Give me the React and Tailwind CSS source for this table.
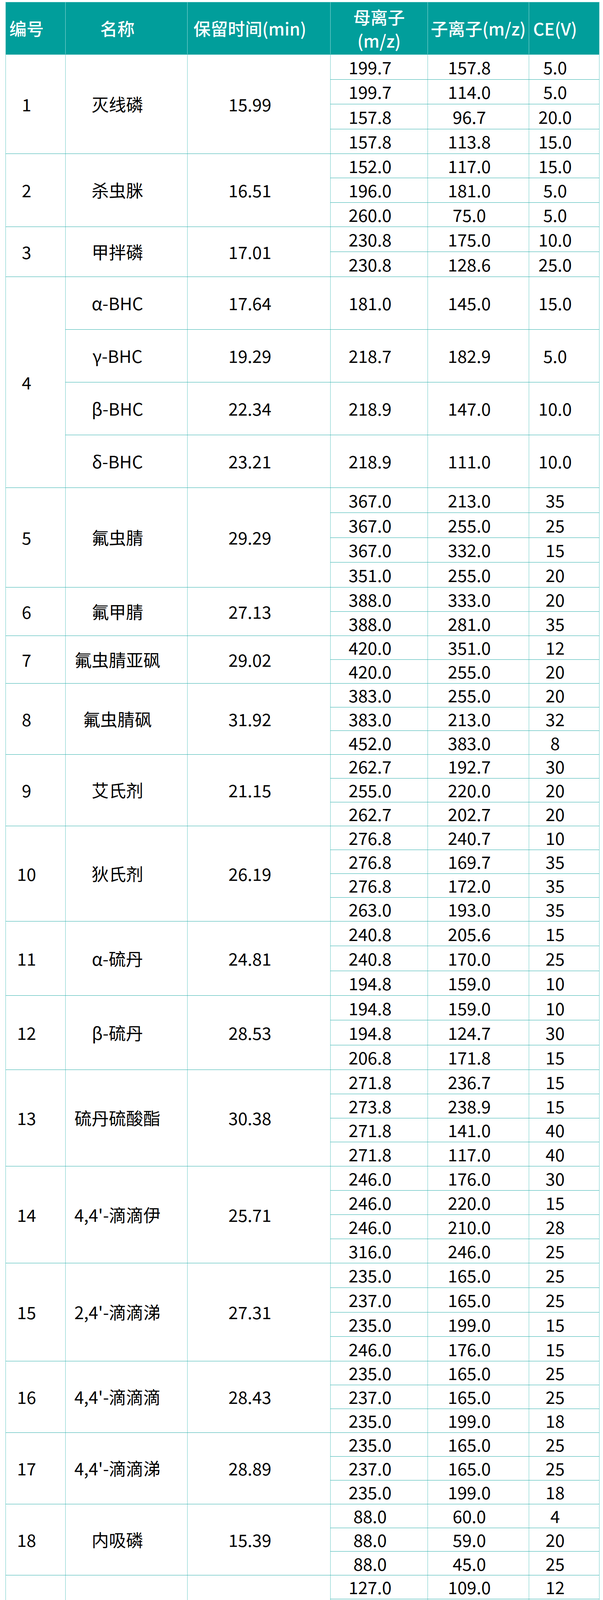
import React from "react";

const groups = [
  { n: "1", name: "灭线磷", t: "15.99", h: "h-[254px]", rows: [["199.7", "157.8", "5.0"], ["199.7", "114.0", "5.0"], ["157.8", "96.7", "20.0"], ["157.8", "113.8", "15.0"]] },
  { n: "2", name: "杀虫脒", t: "16.51", h: "h-[187px]", rows: [["152.0", "117.0", "15.0"], ["196.0", "181.0", "5.0"], ["260.0", "75.0", "5.0"]] },
  { n: "3", name: "甲拌磷", t: "17.01", h: "h-[128px]", rows: [["230.8", "175.0", "10.0"], ["230.8", "128.6", "25.0"]] },
  {
    n: "4", bhc: true, h: "h-[540px]",
    rows: [["α-BHC", "17.64", "181.0", "145.0", "15.0"], ["γ-BHC", "19.29", "218.7", "182.9", "5.0"], ["β-BHC", "22.34", "218.9", "147.0", "10.0"], ["δ-BHC", "23.21", "218.9", "111.0", "10.0"]],
  },
  { n: "5", name: "氟虫腈", t: "29.29", h: "h-[255px]", rows: [["367.0", "213.0", "35"], ["367.0", "255.0", "25"], ["367.0", "332.0", "15"], ["351.0", "255.0", "20"]] },
  { n: "6", name: "氟甲腈", t: "27.13", h: "h-[124px]", rows: [["388.0", "333.0", "20"], ["388.0", "281.0", "35"]] },
  { n: "7", name: "氟虫腈亚砜", t: "29.02", h: "h-[122px]", rows: [["420.0", "351.0", "12"], ["420.0", "255.0", "20"]] },
  { n: "8", name: "氟虫腈砜", t: "31.92", h: "h-[182px]", rows: [["383.0", "255.0", "20"], ["383.0", "213.0", "32"], ["452.0", "383.0", "8"]] },
  { n: "9", name: "艾氏剂", t: "21.15", h: "h-[183px]", rows: [["262.7", "192.7", "30"], ["255.0", "220.0", "20"], ["262.7", "202.7", "20"]] },
  { n: "10", name: "狄氏剂", t: "26.19", h: "h-[244px]", rows: [["276.8", "240.7", "10"], ["276.8", "169.7", "35"], ["276.8", "172.0", "35"], ["263.0", "193.0", "35"]] },
  { n: "11", name: "α-硫丹", t: "24.81", h: "h-[190px]", rows: [["240.8", "205.6", "15"], ["240.8", "170.0", "25"], ["194.8", "159.0", "10"]] },
  { n: "12", name: "β-硫丹", t: "28.53", h: "h-[190px]", rows: [["194.8", "159.0", "10"], ["194.8", "124.7", "30"], ["206.8", "171.8", "15"]] },
  { n: "13", name: "硫丹硫酸酯", t: "30.38", h: "h-[247px]", rows: [["271.8", "236.7", "15"], ["273.8", "238.9", "15"], ["271.8", "141.0", "40"], ["271.8", "117.0", "40"]] },
  { n: "14", name: "4,4'-滴滴伊", t: "25.71", h: "h-[248px]", rows: [["246.0", "176.0", "30"], ["246.0", "220.0", "15"], ["246.0", "210.0", "28"], ["316.0", "246.0", "25"]] },
  { n: "15", name: "2,4'-滴滴涕", t: "27.31", h: "h-[251px]", rows: [["235.0", "165.0", "25"], ["237.0", "165.0", "25"], ["235.0", "199.0", "15"], ["246.0", "176.0", "15"]] },
  { n: "16", name: "4,4'-滴滴滴", t: "28.43", h: "h-[183px]", rows: [["235.0", "165.0", "25"], ["237.0", "165.0", "25"], ["235.0", "199.0", "18"]] },
  { n: "17", name: "4,4'-滴滴涕", t: "28.89", h: "h-[183px]", rows: [["235.0", "165.0", "25"], ["237.0", "165.0", "25"], ["235.0", "199.0", "18"]] },
  { n: "18", name: "内吸磷", t: "15.39", h: "h-[182px]", rows: [["88.0", "60.0", "4"], ["88.0", "59.0", "20"], ["88.0", "45.0", "25"]] },
  { n: "19", name: "久效磷", t: "20.86", h: "h-[182px]", rows: [["127.0", "109.0", "12"], ["127.0", "95.0", "16"], ["127.0", "79.0", "20"]] },
  { n: "20", name: "特丁硫磷", t: "18.56", h: "h-[184px]", rows: [["230.8", "129.0", "25"], ["230.8", "203.0", "5"], ["230.8", "175.0", "13"]] },
  { n: "21", name: "甲基对硫磷", t: "22.95", h: "h-[190px]", rows: [["263.1", "109.0", "13"], ["263.1", "79.0", "35"], ["263.1", "136.0", "5"]] },
  { n: "22", name: "对硫磷", t: "24.44", h: "h-[189px]", rows: [["291.0", "109.0", "25"], ["291.0", "81.0", "30"], ["139.0", "109.0", "10"]] },
  { n: "23", name: "三氯杀螨醇", t: "23.31", h: "h-[182px]", rows: [["250.0", "139.0", "15"], ["250.0", "215.0", "5"], ["139.0", "111.0", "15"]] },
  { n: "24", name: "甲基异硫磷", t: "24.51", h: "h-[184px]", rows: [["241.0", "199.0", "5"], ["241.0", "166.7", "10"], ["241.0", "120.8", "20"]] },
  { n: "25", name: "水胺硫磷", t: "25.05", h: "h-[240px]", rows: [["135.7", "108.0", "15"], ["120.7", "65.0", "20"], ["229.7", "211.7", "10"], ["121.0", "93.0", "15"]] },
  { n: "26", name: "甲基硫环磷", t: "26.62", h: "h-[242px]", rows: [["227.0", "92.0", "10"], ["227.0", "60.0", "30"], ["227.0", "167.8", "10"], ["168.0", "109.0", "15"]] },
  { n: "27", name: "除草醚", t: "28.20", h: "h-[182px]", rows: [["201.8", "138.7", "28"], ["282.8", "201.8", "15"], ["282.8", "253.0", "10"]] },
  { n: "28", name: "蝇毒磷", t: "33.92", h: "h-[121px]", rows: [["361.8", "109.0", "16"], ["361.8", "225.8", "14"]] },
  { n: "29", name: "苯线磷", t: "27.32", h: "h-[183px]", rows: [["326.0", "233", "10"], ["326.0", "215", "25"], ["326.0", "169", "30"]] },
  { n: "30", name: "治螟磷", t: "17.14", h: "h-[179px]", rows: [["322.0", "202.0", "20"], ["322.0", "294.0", "10"], ["322.0", "174.0", "15"]] },
];

const cell = "flex items-center justify-center pr-[46px] whitespace-nowrap";
const vline = "border-l border-[#6ccac7]";
const hline = "border-t border-[#2eafac]";

function SubRows({ rows }) {
  return (
    <div className="flex flex-1 flex-col">
      {rows.map((r, i) => (
        <div key={i} className={`flex flex-1 ${i ? hline : ""}`}>
          <div className={`w-[249px] shrink-0 ${cell} ${vline}`}>{r[0]}</div>
          <div className={`w-[259px] shrink-0 ${cell} ${vline}`}>{r[1]}</div>
          <div className={`flex-1 ${cell} ${vline}`}>{r[2]}</div>
        </div>
      ))}
    </div>
  );
}

function Group({ g }) {
  if (g.bhc) {
    return (
      <div className={`flex ${g.h} ${hline}`}>
        <div className={`w-[152px] shrink-0 ${cell}`}>{g.n}</div>
        <div className="flex flex-1 flex-col">
          {g.rows.map((r, i) => (
            <div key={i} className={`flex flex-1 ${i ? hline : ""}`}>
              <div className={`w-[312px] shrink-0 ${cell} ${vline}`}>{r[0]}</div>
              <div className={`w-[366px] shrink-0 ${cell} ${vline}`}>{r[1]}</div>
              <div className={`w-[249px] shrink-0 ${cell} ${vline}`}>{r[2]}</div>
              <div className={`w-[259px] shrink-0 ${cell} ${vline}`}>{r[3]}</div>
              <div className={`flex-1 ${cell} ${vline}`}>{r[4]}</div>
            </div>
          ))}
        </div>
      </div>
    );
  }
  return (
    <div className={`flex ${g.h} ${hline}`}>
      <div className={`w-[152px] shrink-0 ${cell}`}>{g.n}</div>
      <div className={`w-[312px] shrink-0 ${cell} ${vline}`}>{g.name}</div>
      <div className={`w-[366px] shrink-0 ${cell} ${vline}`}>{g.t}</div>
      <SubRows rows={g.rows} />
    </div>
  );
}

export default function App() {
  const hv = "border-l border-[#8fd8d6]";
  return (
    <div className="bg-white pt-[5px] pb-[20px] font-['Noto_Sans_CJK_SC','Noto_Sans',sans-serif] text-[44px] leading-[1.3] text-black">
      <div className="ml-[14px] box-border w-[1520px] border border-[#6ccac7]">
        <div className="flex h-[133px] bg-[#019e9b] font-medium text-white">
          <div className={`w-[152px] shrink-0 ${cell}`}>编号</div>
          <div className={`w-[312px] shrink-0 ${cell} ${hv}`}>名称</div>
          <div className={`w-[366px] shrink-0 ${cell} ${hv}`}>保留时间(min)</div>
          <div className={`flex w-[249px] shrink-0 flex-col items-center justify-center text-center leading-[60px] ${hv}`}>
            <span>母离子</span>
            <span>(m/z)</span>
          </div>
          <div className={`flex w-[259px] shrink-0 items-center justify-center whitespace-nowrap ${hv}`}>子离子(m/z)</div>
          <div className={`flex-1 ${cell} ${hv}`}>CE(V)</div>
        </div>
        {groups.map((g) => (
          <Group key={g.n} g={g} />
        ))}
      </div>
    </div>
  );
}
